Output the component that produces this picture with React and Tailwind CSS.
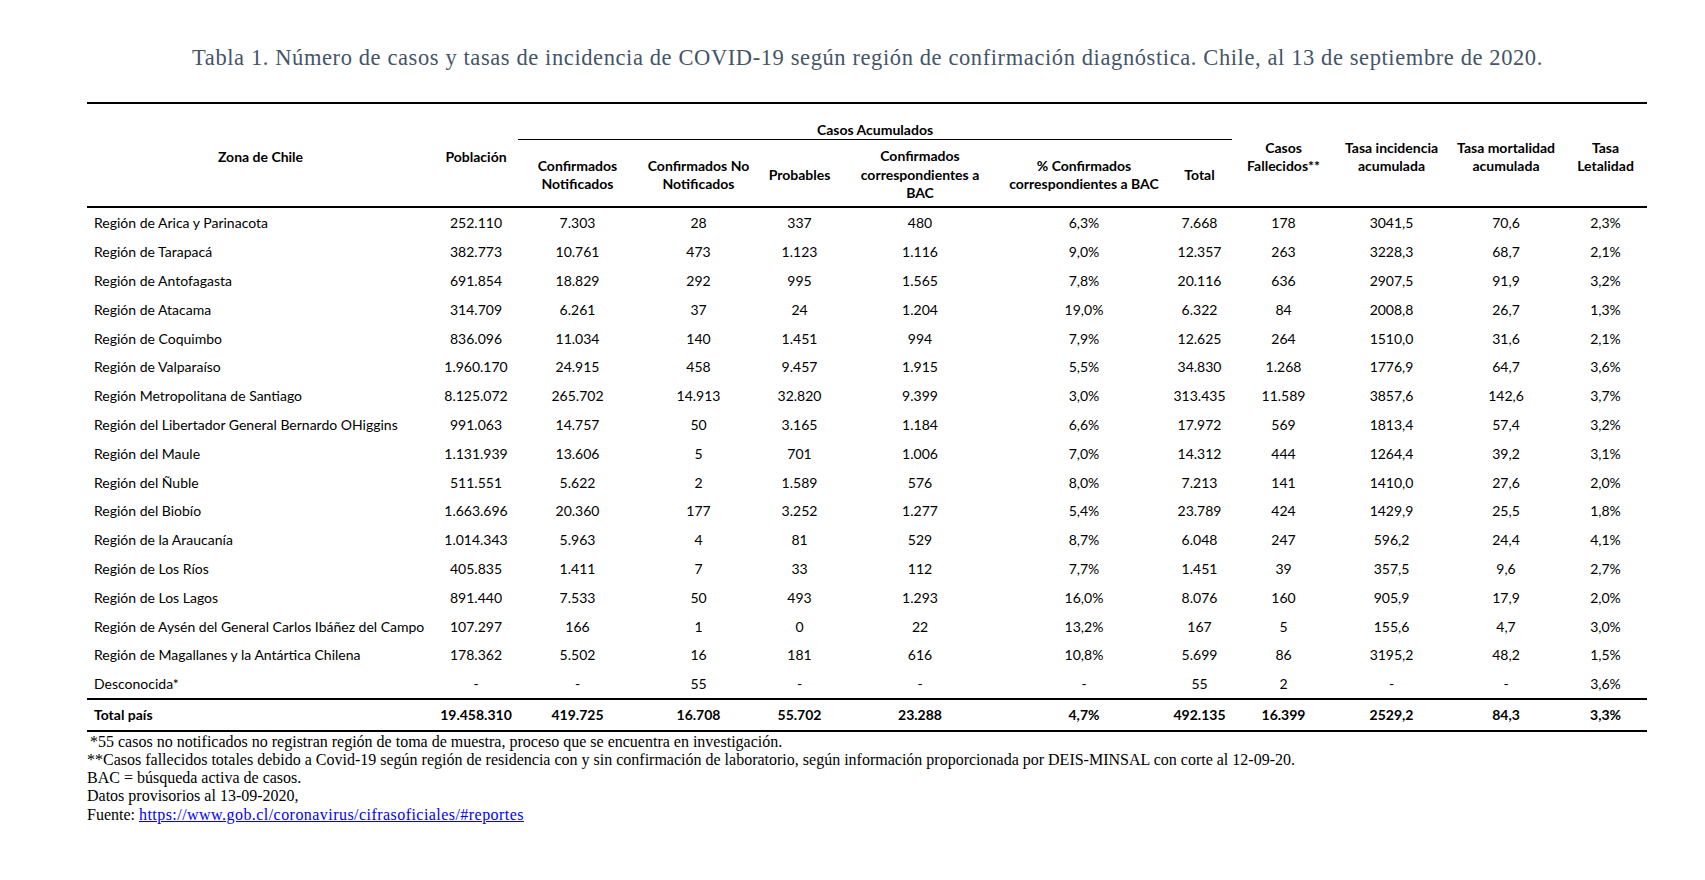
const rows = [
  ["Región de Arica y Parinacota", "252.110", "7.303", "28", "337", "480", "6,3%", "7.668", "178", "3041,5", "70,6", "2,3%"],
  ["Región de Tarapacá", "382.773", "10.761", "473", "1.123", "1.116", "9,0%", "12.357", "263", "3228,3", "68,7", "2,1%"],
  ["Región de Antofagasta", "691.854", "18.829", "292", "995", "1.565", "7,8%", "20.116", "636", "2907,5", "91,9", "3,2%"],
  ["Región de Atacama", "314.709", "6.261", "37", "24", "1.204", "19,0%", "6.322", "84", "2008,8", "26,7", "1,3%"],
  ["Región de Coquimbo", "836.096", "11.034", "140", "1.451", "994", "7,9%", "12.625", "264", "1510,0", "31,6", "2,1%"],
  ["Región de Valparaíso", "1.960.170", "24.915", "458", "9.457", "1.915", "5,5%", "34.830", "1.268", "1776,9", "64,7", "3,6%"],
  ["Región Metropolitana de Santiago", "8.125.072", "265.702", "14.913", "32.820", "9.399", "3,0%", "313.435", "11.589", "3857,6", "142,6", "3,7%"],
  ["Región del Libertador General Bernardo OHiggins", "991.063", "14.757", "50", "3.165", "1.184", "6,6%", "17.972", "569", "1813,4", "57,4", "3,2%"],
  ["Región del Maule", "1.131.939", "13.606", "5", "701", "1.006", "7,0%", "14.312", "444", "1264,4", "39,2", "3,1%"],
  ["Región del Ñuble", "511.551", "5.622", "2", "1.589", "576", "8,0%", "7.213", "141", "1410,0", "27,6", "2,0%"],
  ["Región del Biobío", "1.663.696", "20.360", "177", "3.252", "1.277", "5,4%", "23.789", "424", "1429,9", "25,5", "1,8%"],
  ["Región de la Araucanía", "1.014.343", "5.963", "4", "81", "529", "8,7%", "6.048", "247", "596,2", "24,4", "4,1%"],
  ["Región de Los Ríos", "405.835", "1.411", "7", "33", "112", "7,7%", "1.451", "39", "357,5", "9,6", "2,7%"],
  ["Región de Los Lagos", "891.440", "7.533", "50", "493", "1.293", "16,0%", "8.076", "160", "905,9", "17,9", "2,0%"],
  ["Región de Aysén del General Carlos Ibáñez del Campo", "107.297", "166", "1", "0", "22", "13,2%", "167", "5", "155,6", "4,7", "3,0%"],
  ["Región de Magallanes y la Antártica Chilena", "178.362", "5.502", "16", "181", "616", "10,8%", "5.699", "86", "3195,2", "48,2", "1,5%"],
  ["Desconocida*", "-", "-", "55", "-", "-", "-", "55", "2", "-", "-", "3,6%"],
];

const total = ["Total país", "19.458.310", "419.725", "16.708", "55.702", "23.288", "4,7%", "492.135", "16.399", "2529,2", "84,3", "3,3%"];

// column widths measured off the picture
const widths = [347, 84, 119, 123, 79, 162, 166, 65, 103, 113, 116, 83];

const spanTh = "border-t-2 border-b-2 border-black align-middle pt-[4px] font-bold whitespace-nowrap";
const subTh = "border-b-2 border-black align-middle pt-[4px] font-bold whitespace-nowrap";

export default function App() {
  return (
    <div className="w-[1705px] h-[880px] bg-white text-black">
      <h1 className="pt-[44px] pl-[30px] text-center text-[22.5px] leading-[28px] tracking-[0.6px] text-[#44546a] font-['Liberation_Serif',serif]">
        Tabla 1. Número de casos y tasas de incidencia de COVID-19 según región de confirmación diagnóstica. Chile, al 13 de septiembre de 2020.
      </h1>

      <div className="ml-[87px] mt-[30px] w-[1560px]">
        <table className="table-fixed w-[1560px] border-separate border-spacing-0 font-['Lato',sans-serif] text-[14px]">
          <colgroup>
            {widths.map((w, i) => (
              <col key={i} style={{ width: w }} />
            ))}
          </colgroup>
          <thead className="font-bold leading-[18.5px]">
            <tr className="h-[38px]">
              <th rowSpan={2} className={spanTh}>Zona de Chile</th>
              <th rowSpan={2} className={spanTh}>Población</th>
              <th colSpan={6} className="border-t-2 border-b-[1.5px] border-black align-bottom pb-0 font-bold">Casos Acumulados</th>
              <th rowSpan={2} className={spanTh}>Casos<br />Fallecidos**</th>
              <th rowSpan={2} className={spanTh}>Tasa incidencia<br />acumulada</th>
              <th rowSpan={2} className={spanTh}>Tasa mortalidad<br />acumulada</th>
              <th rowSpan={2} className={spanTh}>Tasa<br />Letalidad</th>
            </tr>
            <tr className="h-[68px]">
              <th className={subTh}>Confirmados<br />Notificados</th>
              <th className={subTh}>Confirmados No<br />Notificados</th>
              <th className={subTh}>Probables</th>
              <th className={subTh}>Confirmados<br />correspondientes a<br />BAC</th>
              <th className={subTh}>% Confirmados<br />correspondientes a BAC</th>
              <th className={subTh}>Total</th>
            </tr>
          </thead>
          <tbody>
            {rows.map((r) => (
              <tr key={r[0]} className="h-[28.8px]">
                {r.map((v, i) => (
                  <td
                    key={i}
                    className={i === 0 ? "text-left pl-[7px] pt-[1px] align-middle whitespace-nowrap" : "text-center pt-[1px] align-middle"}
                  >
                    {v}
                  </td>
                ))}
              </tr>
            ))}
            <tr className="h-[34px] font-bold">
              {total.map((v, i) => (
                <td
                  key={i}
                  className={
                    i === 0
                      ? "text-left pl-[7px] border-t-2 border-b-2 border-black align-middle"
                      : "text-center border-t-2 border-b-2 border-black align-middle"
                  }
                >
                  {v}
                </td>
              ))}
            </tr>
          </tbody>
        </table>

        <div className="font-['Liberation_Serif',serif] text-[16px] leading-[18.3px] pt-[1px]">
          <p className="pl-[3px]">*55 casos no notificados no registran región de toma de muestra, proceso que se encuentra en investigación.</p>
          <p>**Casos fallecidos totales debido a Covid-19 según región de residencia con y sin confirmación de laboratorio, según información proporcionada por DEIS-MINSAL con corte al 12-09-20.</p>
          <p>BAC = búsqueda activa de casos.</p>
          <p>Datos provisorios al 13-09-2020,</p>
          <p>
            Fuente:{" "}
            <a href="#reportes" className="text-[#0000ff] underline tracking-[0.45px]">
              https://www.gob.cl/coronavirus/cifrasoficiales/#reportes
            </a>
          </p>
        </div>
      </div>
    </div>
  );
}
